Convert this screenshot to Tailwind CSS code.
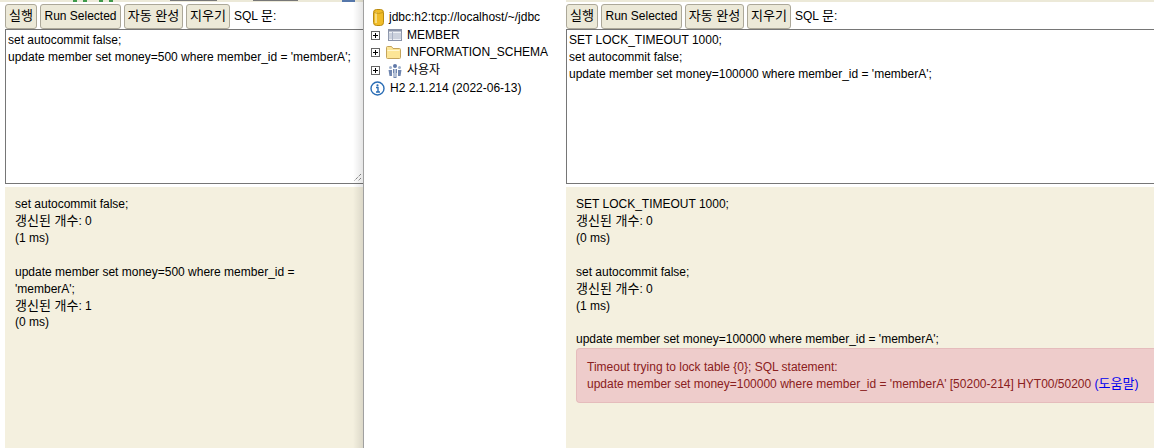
<!DOCTYPE html>
<html>
  <head>
    <title>H2 Console</title>
    <meta name="viewport" content="width=device-width, initial-scale=1">
    <script src="https://cdn.jsdelivr.net/npm/@tailwindcss/browser@4"></script>
  </head>
  <body class="flex w-[1154px] h-[448px] overflow-hidden bg-white text-black text-[12px] leading-[16.9px] font-['Liberation_Sans','Noto_Sans_CJK_KR',sans-serif]">

    <!-- left query panel -->
    <div class="relative flex flex-col w-[364px] h-full border-r border-[#a0a0a0] bg-white">
      <!-- scraps of the row above, cut off at the top -->
      <span class="absolute top-0 left-[73px] w-[4px] h-[2px] bg-[#3f9a4a]"></span>
      <span class="absolute top-0 left-[83px] w-[4px] h-[2px] bg-[#3f9a4a]"></span>
      <span class="absolute top-0 left-[99px] w-[4px] h-[2px] bg-[#3f9a4a]"></span>
      <span class="absolute top-0 left-[109px] w-[4px] h-[2px] bg-[#3f9a4a]"></span>
      <span class="absolute top-0 left-[170px] w-[47px] h-px bg-[#777777]"></span>
      <span class="absolute top-0 left-[253px] w-[45px] h-px bg-[#777777]"></span>
      <span class="absolute top-0 left-[342px] w-[13px] h-[2px] bg-[#5577aa]"></span>

      <div class="flex items-center gap-[3px] h-[29px] pl-[5px] pt-[2px] border-t-[2px] border-[#ece9d8]">
        <button class="w-[32px] h-[25px] bg-[#ece9d8] border border-[#aca899] rounded-[3px] text-[13px]">실행</button>
        <button class="w-[81px] h-[25px] bg-[#ece9d8] border border-[#aca899] rounded-[3px]">Run Selected</button>
        <button class="w-[59px] h-[25px] bg-[#ece9d8] border border-[#aca899] rounded-[3px] text-[13px]">자동 완성</button>
        <button class="w-[44px] h-[25px] bg-[#ece9d8] border border-[#aca899] rounded-[3px] text-[13px]">지우기</button>
        <span class="ml-[1px]">SQL <span class="text-[13px]">문</span>:</span>
      </div>
      <div class="relative ml-[5px] h-[155px] pl-[2px] pt-[2px] border border-r-0 border-[#767676]">
        <p>set autocommit false;</p>
        <p>update member set money=500 where member_id = 'memberA';</p>
        <svg class="absolute right-[1px] bottom-[1px]" width="10" height="10" viewBox="0 0 10 10"><path d="M9 2 2 9M9 6 6 9" stroke="#555" stroke-dasharray="1 1" fill="none"/></svg>
      </div>
      <div class="flex-1 ml-[5px] mt-[3px] pl-[10px] pt-[9px] bg-[#f4f0df]">
        <p>set autocommit false;</p>
        <p><span class="text-[13px]">갱신된 개수</span>: 0</p>
        <p>(1 ms)</p>
        <p class="mt-[17px] w-[320px]">update member set money=500 where member_id = 'memberA';</p>
        <p><span class="text-[13px]">갱신된 개수</span>: 1</p>
        <p>(0 ms)</p>
      </div>
      <!-- edge shadow lying over the panel -->
      <div class="absolute top-0 right-0 bottom-0 w-[10px] bg-gradient-to-r from-black/0 to-black/10"></div>
    </div>

    <!-- object tree -->
    <div class="flex flex-col w-[202px] h-full pt-[8px] pl-[7px]">
      <div class="flex items-center h-[18px] gap-[5px] pl-[2px]">
        <svg width="11" height="17" viewBox="0 0 11 17"><rect x=".5" y=".5" width="10" height="16" rx="3" fill="#f0bc28" stroke="#b98a10"/><path d="M3 3v11" stroke="#fbe9a0" stroke-width="1.500"/><path d="M1 3.500q4.500 2 9 0" stroke="#c99a18" fill="none"/></svg>
        <span>jdbc:h2:tcp://localhost/~/jdbc</span>
      </div>
      <div class="flex items-center h-[18px]">
        <svg class="mr-[8px]" width="9" height="9" viewBox="0 0 9 9"><rect x=".5" y=".5" width="8" height="8" fill="#fff" stroke="#666"/><path d="M2 4.500h5M4.500 2v5" stroke="#000"/></svg>
        <svg class="mr-[5px]" width="14" height="12" viewBox="0 0 14 12"><rect x=".5" y=".5" width="13" height="11" fill="#eef1f6" stroke="#8a93a8"/><path d="M1 1.500h12" stroke="#8a93a8" stroke-width="2"/><path d="M.5 5h13M.5 7h13M.5 9h13M4.500 3v8" stroke="#a9b2c4"/></svg>
        <span>MEMBER</span>
      </div>
      <div class="flex items-center h-[18px] mt-[-1px]">
        <svg class="mr-[6px]" width="9" height="9" viewBox="0 0 9 9"><rect x=".5" y=".5" width="8" height="8" fill="#fff" stroke="#666"/><path d="M2 4.500h5M4.500 2v5" stroke="#000"/></svg>
        <svg class="mr-[6px]" width="15" height="14" viewBox="0 0 15 14"><path d="M.5 12.500V2.500q0-1 1-1h4l1.500 2h6.500q1 0 1 1v8q0 1-1 1h-12q-1 0-1-1z" fill="#fce596" stroke="#c4a45c"/><path d="M1.500 5.500h12" stroke="#fff6d0"/></svg>
        <span>INFORMATION_SCHEMA</span>
      </div>
      <div class="flex items-center h-[18px]">
        <svg class="mr-[8px]" width="9" height="9" viewBox="0 0 9 9"><rect x=".5" y=".5" width="8" height="8" fill="#fff" stroke="#666"/><path d="M2 4.500h5M4.500 2v5" stroke="#000"/></svg>
        <svg class="mr-[5px]" width="14" height="15" viewBox="0 0 14 15"><circle cx="7" cy="3" r="2" fill="#5f78a8"/><circle cx="2.500" cy="4.500" r="1.500" fill="#9fb0cc"/><circle cx="11.500" cy="4.500" r="1.500" fill="#9fb0cc"/><path d="M5 6h4v4H8.500v5h-3v-5H5zM.5 7h3.500v6H1.500zM10 7h3.500l-1 6H10z" fill="#6f86b0"/><path d="M7 6v8" stroke="#fff"/></svg>
        <span>사용자</span>
      </div>
      <div class="flex items-center h-[18px] gap-[5px]">
        <svg class="ml-[-1px]" width="15" height="15" viewBox="0 0 15 15"><circle cx="7.500" cy="7.500" r="6.500" fill="#fff" stroke="#2a6db5" stroke-width="1.400"/><circle cx="7.500" cy="4.300" r="1.100" fill="#2a6db5"/><path d="M6 6.500H8V11M6 11H10" stroke="#2a6db5" stroke-width="1.400" fill="none"/></svg>
        <span>H2 2.1.214 (2022-06-13)</span>
      </div>
    </div>

    <!-- right query panel -->
    <div class="flex flex-col flex-1 h-full">
      <div class="flex items-center gap-[3px] h-[29px] pt-[2px] border-t-[2px] border-[#ece9d8]">
        <button class="w-[32px] h-[25px] bg-[#ece9d8] border border-[#aca899] rounded-[3px] text-[13px]">실행</button>
        <button class="w-[81px] h-[25px] bg-[#ece9d8] border border-[#aca899] rounded-[3px]">Run Selected</button>
        <button class="w-[59px] h-[25px] bg-[#ece9d8] border border-[#aca899] rounded-[3px] text-[13px]">자동 완성</button>
        <button class="w-[44px] h-[25px] bg-[#ece9d8] border border-[#aca899] rounded-[3px] text-[13px]">지우기</button>
        <span class="ml-[1px]">SQL <span class="text-[13px]">문</span>:</span>
      </div>
      <div class="h-[155px] pl-[2px] pt-[2px] border border-r-0 border-[#767676]">
        <p>SET LOCK_TIMEOUT 1000;</p>
        <p>set autocommit false;</p>
        <p>update member set money=100000 where member_id = 'memberA';</p>
      </div>
      <div class="flex-1 mt-[3px] pl-[10px] pt-[9px] bg-[#f4f0df]">
        <p>SET LOCK_TIMEOUT 1000;</p>
        <p><span class="text-[13px]">갱신된 개수</span>: 0</p>
        <p>(0 ms)</p>
        <p class="mt-[17px]">set autocommit false;</p>
        <p><span class="text-[13px]">갱신된 개수</span>: 0</p>
        <p>(1 ms)</p>
        <p class="mt-[17px]">update member set money=100000 where member_id = 'memberA';</p>
        <div class="h-[55px] pl-[10px] pt-[10px] bg-[#eecccb] border border-r-0 border-[#e5bcbc] rounded-l-[4px] text-[#8a2020]">
          <p>Timeout trying to lock table {0}; SQL statement:</p>
          <p>update member set money=100000 where member_id = 'memberA' [50200-214] HYT00/50200 <a class="text-[#0000ee]">(<span class="text-[13px]">도움말</span>)</a></p>
        </div>
      </div>
    </div>
  </body>
</html>
